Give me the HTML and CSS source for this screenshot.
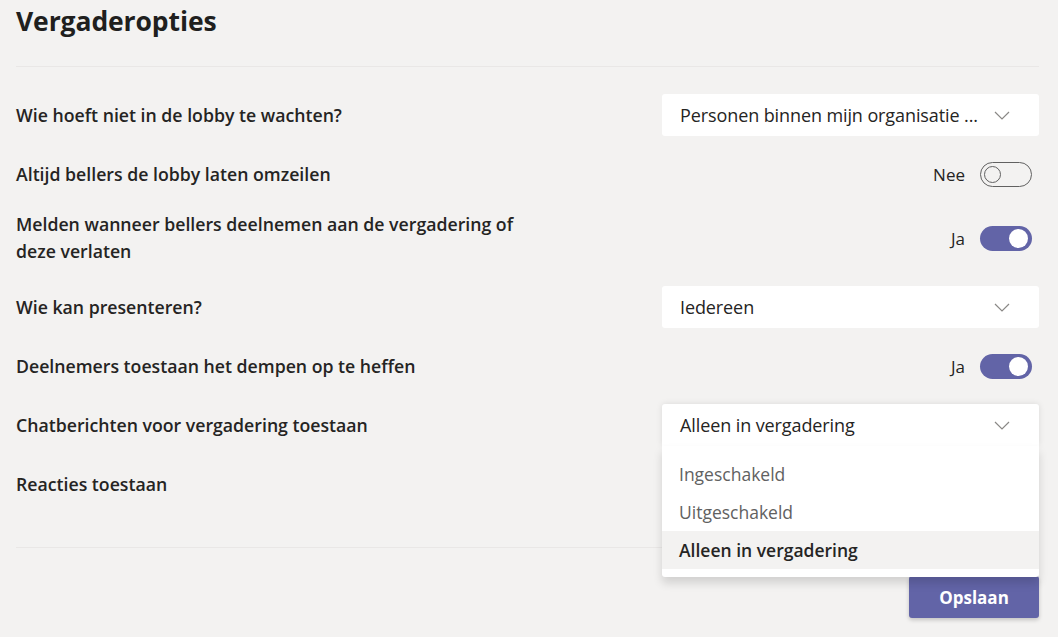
FILE: index.html
```html
<!DOCTYPE html>
<html lang="nl">
<head>
<meta charset="utf-8">
<title>Vergaderopties</title>
<link rel="stylesheet" href="styles.css">
</head>
<body>
<div class="page">
  <header class="header">
    <h1 class="title">Vergaderopties</h1>
  </header>
  <div class="rows">
    <div class="row">
      <div class="label">Wie hoeft niet in de lobby te wachten?</div>
      <div class="select"><span class="select-text">Personen binnen mijn organisatie ...</span><svg class="chev" viewBox="0 0 16 9" width="16" height="9"><path d="M1 1 L8 8 L15 1" fill="none" stroke="#8a8886" stroke-width="1.2"/></svg></div>
    </div>
    <div class="row">
      <div class="label">Altijd bellers de lobby laten omzeilen</div>
      <div class="toggle-wrap"><span class="toggle-text">Nee</span><span class="toggle off"><span class="knob"></span></span></div>
    </div>
    <div class="row row-tall">
      <div class="label label-wrap">Melden wanneer bellers deelnemen aan de vergadering of deze verlaten</div>
      <div class="toggle-wrap"><span class="toggle-text">Ja</span><span class="toggle on"><span class="knob"></span></span></div>
    </div>
    <div class="row">
      <div class="label">Wie kan presenteren?</div>
      <div class="select"><span class="select-text">Iedereen</span><svg class="chev" viewBox="0 0 16 9" width="16" height="9"><path d="M1 1 L8 8 L15 1" fill="none" stroke="#8a8886" stroke-width="1.2"/></svg></div>
    </div>
    <div class="row">
      <div class="label">Deelnemers toestaan het dempen op te heffen</div>
      <div class="toggle-wrap"><span class="toggle-text">Ja</span><span class="toggle on"><span class="knob"></span></span></div>
    </div>
    <div class="row">
      <div class="label">Chatberichten voor vergadering toestaan</div>
      <div class="select select-open"><span class="select-text">Alleen in vergadering</span><svg class="chev" viewBox="0 0 16 9" width="16" height="9"><path d="M1 1 L8 8 L15 1" fill="none" stroke="#8a8886" stroke-width="1.2"/></svg>
        <ul class="menu">
          <li class="menu-item">Ingeschakeld</li>
          <li class="menu-item">Uitgeschakeld</li>
          <li class="menu-item selected">Alleen in vergadering</li>
        </ul>
      </div>
    </div>
    <div class="row">
      <div class="label">Reacties toestaan</div>
    </div>
  </div>
  <footer class="footer">
    <button class="save">Opslaan</button>
  </footer>
</div>
</body>
</html>
```
FILE: styles.css
```css
* { box-sizing: border-box; }
html, body {
  margin: 0;
  padding: 0;
  background: #f3f2f1;
  height: 100%;
  overflow: hidden;
}
body {
  font-family: "Open Sans", "Noto Sans", sans-serif;
  color: #252423;
}
.page {
  padding: 0 19px 0 16px;
}
.header {
  height: 67px;
  border-bottom: 1px solid #e9e7e6;
}
.title {
  margin: 0;
  padding-top: 4px;
  font-size: 26.5px;
  line-height: 34px;
  font-weight: 700;
  color: #201f1e;
  letter-spacing: -0.1px;
}
.rows {
  display: flex;
  flex-direction: column;
  gap: 17px;
  padding-top: 27px;
  padding-bottom: 42px;
  border-bottom: 1px solid #e9e7e6;
}
.row {
  display: flex;
  align-items: center;
  justify-content: space-between;
  min-height: 42px;
}
.row-tall {
  padding: 0 0 4px;
  margin-top: -1px;
}
.label {
  font-size: 17.7px;
  font-weight: 600;
  line-height: 27px;
  color: #252423;
}
.label-wrap {
  width: 528px;
}
.select {
  position: relative;
  width: 377px;
  height: 42px;
  background: #ffffff;
  border-radius: 3px;
  display: flex;
  align-items: center;
  justify-content: space-between;
  padding: 0 29px 0 18px;
}
.select-text {
  font-size: 18px;
  color: #252423;
  letter-spacing: -0.1px;
}
.chev {
  display: block;
}
.select-open {
  border-radius: 3px 3px 0 0;
  box-shadow: 0 0 6px rgba(0, 0, 0, 0.10);
}
.menu {
  position: absolute;
  left: 0;
  top: 42px;
  width: 377px;
  margin: 0;
  padding: 9px 0 8px;
  list-style: none;
  background: #ffffff;
  border-radius: 0 0 3px 3px;
  box-shadow: 0 6px 10px rgba(0, 0, 0, 0.14);
  z-index: 5;
}
.menu-item {
  height: 38px;
  line-height: 38px;
  padding-left: 17px;
  font-size: 17.5px;
  color: #616161;
}
.menu-item.selected {
  background: #f3f2f1;
  color: #252423;
  font-weight: 600;
}
.toggle-wrap {
  display: flex;
  align-items: center;
  gap: 15px;
  padding-right: 7px;
}
.toggle-text {
  font-size: 17px;
  color: #252423;
}
.toggle {
  width: 52px;
  height: 25px;
  border-radius: 13px;
  display: flex;
  align-items: center;
}
.toggle.off {
  border: 1.5px solid #616161;
  padding-left: 3px;
}
.toggle.off .knob {
  width: 17px;
  height: 17px;
  border-radius: 50%;
  border: 1.5px solid #616161;
}
.toggle.on {
  background: #6264a7;
  justify-content: flex-end;
  padding-right: 4px;
}
.toggle.on .knob {
  width: 19px;
  height: 19px;
  border-radius: 50%;
  background: #ffffff;
}
.footer {
  display: flex;
  justify-content: flex-end;
  padding-top: 28px;
}
.save {
  width: 130px;
  height: 42px;
  border: none;
  border-radius: 3px;
  background: #6264a7;
  color: #ffffff;
  font-family: "Open Sans", "Noto Sans", sans-serif;
  font-size: 17px;
  font-weight: 700;
  box-shadow: 0 2px 4px rgba(0, 0, 0, 0.2);
}
```
